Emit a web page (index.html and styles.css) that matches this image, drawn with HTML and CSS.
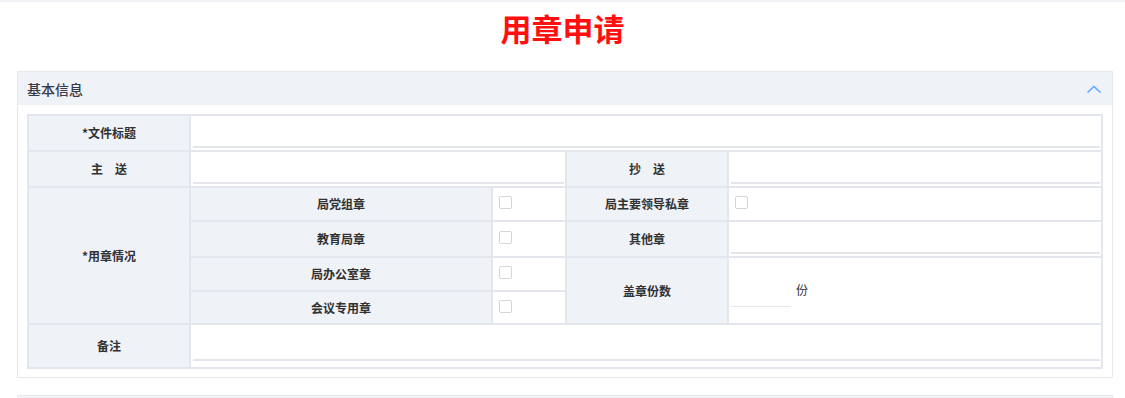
FILE: index.html
```html
<!DOCTYPE html>
<html lang="zh-CN">

<head>
	<meta charset="UTF-8">
	<meta name="viewport" content="width=device-width, initial-scale=1.0">
	<title>用章申请</title>
	<link rel="stylesheet" href="styles.css">
</head>

<body>
	<div class="top-bar"></div>

	<h1 class="page-title">用章申请</h1>

	<div class="panel">
		<div class="panel-head">
			<span class="panel-title">基本信息</span>
			<svg class="arrow" width="16" height="10" viewBox="0 0 16 10">
				<polyline points="1.5,8.5 8,2.5 14.5,8.5" fill="none" stroke="#5ca8ff" stroke-width="1.6" />
			</svg>
		</div>
		<div class="panel-body">
			<table class="form-table">
				<colgroup>
					<col class="c1">
					<col class="c2">
					<col class="c3">
					<col class="c4">
					<col class="c5">
				</colgroup>
				<tr class="r1">
					<td class="label">*文件标题</td>
					<td class="field" colspan="4"><input class="line-input" type="text"></td>
				</tr>
				<tr class="r2">
					<td class="label">主　送</td>
					<td class="field" colspan="2"><input class="line-input" type="text"></td>
					<td class="label">抄　送</td>
					<td class="field"><input class="line-input" type="text"></td>
				</tr>
				<tr class="r3">
					<td class="label" rowspan="4">*用章情况</td>
					<td class="label">局党组章</td>
					<td class="check-cell"><input class="check" type="checkbox"></td>
					<td class="label">局主要领导私章</td>
					<td class="check-cell"><input class="check" type="checkbox"></td>
				</tr>
				<tr class="r4">
					<td class="label">教育局章</td>
					<td class="check-cell"><input class="check" type="checkbox"></td>
					<td class="label">其他章</td>
					<td class="field"><input class="line-input" type="text"></td>
				</tr>
				<tr class="r5">
					<td class="label">局办公室章</td>
					<td class="check-cell"><input class="check" type="checkbox"></td>
					<td class="label" rowspan="2">盖章份数</td>
					<td class="field copies" rowspan="2">
						<input class="line-input short" type="text"><span class="unit">份</span>
					</td>
				</tr>
				<tr class="r6">
					<td class="label">会议专用章</td>
					<td class="check-cell"><input class="check" type="checkbox"></td>
				</tr>
				<tr class="r7">
					<td class="label">备注</td>
					<td class="field note" colspan="4"><textarea class="line-input area"></textarea></td>
				</tr>
			</table>
		</div>
	</div>

	<div class="panel next"></div>
</body>

</html>
```

FILE: styles.css
```css
body {
	margin: 0;
	font-family: "Noto Sans CJK SC", "Noto Sans", sans-serif;
	color: #303133;
	background: #fff;
}

.top-bar {
	height: 2px;
	background: #f0f2f5;
}

.page-title {
	margin: 0;
	height: 69px;
	line-height: 52px;
	text-align: center;
	font-size: 31px;
	font-weight: bold;
	color: #ff0f0f;
}

.panel {
	margin: 0 12px 0 17px;
	border: 1px solid #e6e8ed;
}

.panel.next {
	margin-top: 17px;
	height: 10px;
	background: #f2f4f8;
}

.panel-head {
	display: flex;
	align-items: center;
	justify-content: space-between;
	height: 33px;
	padding: 0 10px 0 9px;
	background: #eff2f7;
}

.panel-title {
	font-size: 14px;
	font-weight: 500;
	color: #363b48;
}

.panel-body {
	padding: 9px 9px 8px;
}

.form-table {
	width: 100%;
	border-collapse: collapse;
	table-layout: fixed;
	border: 2px solid #e3e6ec;
}

.c1 {
	width: 162px;
}

.c2 {
	width: 302px;
}

.c3 {
	width: 74px;
}

.c4 {
	width: 162px;
}

.form-table td {
	border: 2px solid #e3e6ec;
	padding: 0;
	font-size: 12px;
	line-height: 16px;
}

/* 行高按截图逐行调整 */
.r1 td,
.r2 td,
.r3 td,
.r4 td,
.r5 td {
	height: 32px;
}

.r6 td {
	height: 31px;
}

.r7 td {
	height: 36px;
}

.label {
	background: #eff2f7;
	text-align: center;
	font-weight: bold;
	color: #303133;
}

.field {
	background: #fff;
	vertical-align: bottom;
	padding: 0 1px 2px 2px !important;
}

.line-input {
	display: block;
	box-sizing: border-box;
	width: 100%;
	height: 30px;
	margin: 0;
	border: none;
	border-bottom: 2px solid #e4e6eb;
	outline: none;
	background: transparent;
	font-family: inherit;
	font-size: 12px;
	padding: 0 4px;
}

.copies {
	vertical-align: middle;
	padding: 0 2px !important;
}

.copies .line-input.short {
	display: inline-block;
	vertical-align: middle;
	width: 60px;
	height: 30px;
	margin-top: 2px;
	border-bottom-width: 1px;
}

.unit {
	display: inline-block;
	vertical-align: middle;
	margin-left: 5px;
	margin-top: -2px;
	color: #303133;
}

.note {
	padding-bottom: 6px !important;
}

.area {
	resize: none;
	height: 28px;
	overflow: hidden;
}

.check-cell {
	background: #fff;
	padding: 0 0 0 6px !important;
	vertical-align: middle;
}

.check {
	appearance: none;
	display: block;
	box-sizing: border-box;
	width: 13px;
	height: 13px;
	margin: -3px 0 0;
	border: 1px solid #d3d6dc;
	border-radius: 2px;
	background: #fff;
}
```
